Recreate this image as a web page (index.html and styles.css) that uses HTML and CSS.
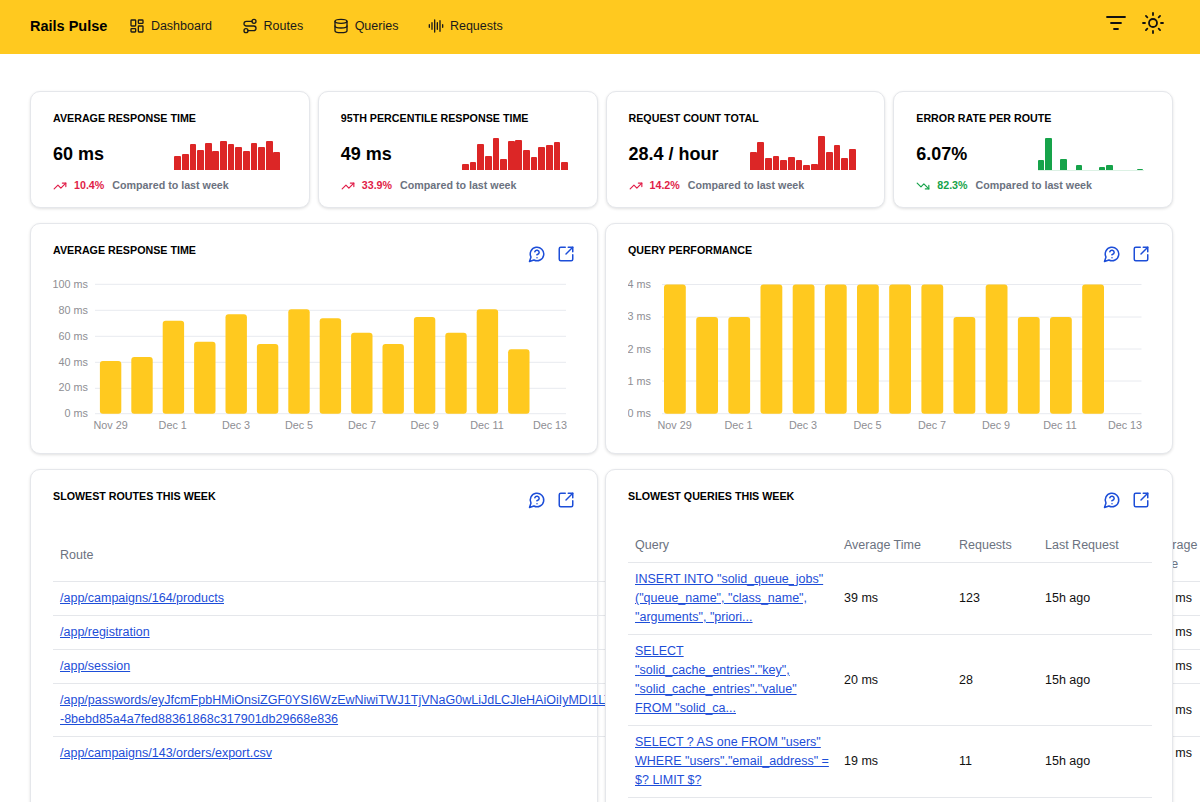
FILE: index.html
```html
<!DOCTYPE html>
<html lang="en">
<head>
<meta charset="utf-8">
<title>Rails Pulse</title>
<link rel="stylesheet" href="styles.css">
</head>
<body>
<header class="topbar">
  <div class="brand">Rails Pulse</div>
  <nav class="nav">
    <a class="nav-item"><svg class="nav-icon" viewBox="0 0 24 24"><rect x="3" y="3" width="7" height="9" rx="1"/><rect x="14" y="3" width="7" height="5" rx="1"/><rect x="14" y="12" width="7" height="9" rx="1"/><rect x="3" y="16" width="7" height="5" rx="1"/></svg>Dashboard</a>
    <a class="nav-item"><svg class="nav-icon" viewBox="0 0 24 24"><circle cx="6" cy="19" r="3"/><path d="M9 19h8.5a3.5 3.5 0 0 0 0-7h-11a3.5 3.5 0 0 1 0-7H15"/><circle cx="18" cy="5" r="3"/></svg>Routes</a>
    <a class="nav-item"><svg class="nav-icon" viewBox="0 0 24 24"><ellipse cx="12" cy="5" rx="9" ry="3"/><path d="M3 5V19A9 3 0 0 0 21 19V5"/><path d="M3 12A9 3 0 0 0 21 12"/></svg>Queries</a>
    <a class="nav-item"><svg class="nav-icon" viewBox="0 0 24 24"><path d="M2 10v4M6 7v10M10 3v18M14 7v10M18 4v16M22 10v4"/></svg>Requests</a>
  </nav>
  <div class="tools">
    <svg class="tool-icon" viewBox="0 0 24 24"><path d="M3 6h18M7 12h10M10 18h4"/></svg>
    <svg class="tool-icon" viewBox="0 0 24 24"><circle cx="12" cy="12" r="4"/><path d="M12 2v2M12 20v2M4.93 4.93l1.41 1.41M17.66 17.66l1.41 1.41M2 12h2M20 12h2M6.34 17.66l-1.41 1.41M19.07 4.93l-1.41 1.41"/></svg>
  </div>
</header>

<main class="page">
  <section class="metrics">
    <article class="card metric">
      <h2 class="card-title">Average Response Time</h2>
      <div class="metric-main">
        <div class="metric-value">60 ms</div>
        <div class="spark spark-red">
          <i style="height:14.4px"></i><i style="height:15.7px"></i><i style="height:25.7px"></i><i style="height:20px"></i><i style="height:27.4px"></i><i style="height:19.4px"></i><i style="height:29px"></i><i style="height:26.4px"></i><i style="height:22.7px"></i><i style="height:19.4px"></i><i style="height:26.7px"></i><i style="height:22.7px"></i><i style="height:29px"></i><i style="height:17.7px"></i>
        </div>
      </div>
      <div class="trend">
        <svg class="trend-icon up" viewBox="0 0 24 24"><path d="M22 7 13.5 15.5 8.5 10.5 2 17"/><path d="M16 7h6v6"/></svg>
        <span class="trend-num up">10.4%</span><span class="trend-note">Compared to last week</span>
      </div>
    </article>
    <article class="card metric">
      <h2 class="card-title">95th Percentile Response Time</h2>
      <div class="metric-main">
        <div class="metric-value">49 ms</div>
        <div class="spark spark-red">
          <i style="height:5.7px"></i><i style="height:7.7px"></i><i style="height:26.3px"></i><i style="height:13.7px"></i><i style="height:31.7px"></i><i style="height:11px"></i><i style="height:29.3px"></i><i style="height:29.7px"></i><i style="height:20.3px"></i><i style="height:12.7px"></i><i style="height:23px"></i><i style="height:24.7px"></i><i style="height:28px"></i><i style="height:8.3px"></i>
        </div>
      </div>
      <div class="trend">
        <svg class="trend-icon up" viewBox="0 0 24 24"><path d="M22 7 13.5 15.5 8.5 10.5 2 17"/><path d="M16 7h6v6"/></svg>
        <span class="trend-num up">33.9%</span><span class="trend-note">Compared to last week</span>
      </div>
    </article>
    <article class="card metric">
      <h2 class="card-title">Request Count Total</h2>
      <div class="metric-main">
        <div class="metric-value">28.4 / hour</div>
        <div class="spark spark-red">
          <i style="height:18.3px"></i><i style="height:27.7px"></i><i style="height:12.3px"></i><i style="height:14.3px"></i><i style="height:9.7px"></i><i style="height:13px"></i><i style="height:9.7px"></i><i style="height:5px"></i><i style="height:6px"></i><i style="height:33.7px"></i><i style="height:17.7px"></i><i style="height:25.3px"></i><i style="height:12.3px"></i><i style="height:21px"></i>
        </div>
      </div>
      <div class="trend">
        <svg class="trend-icon up" viewBox="0 0 24 24"><path d="M22 7 13.5 15.5 8.5 10.5 2 17"/><path d="M16 7h6v6"/></svg>
        <span class="trend-num up">14.2%</span><span class="trend-note">Compared to last week</span>
      </div>
    </article>
    <article class="card metric">
      <h2 class="card-title">Error Rate Per Route</h2>
      <div class="metric-main">
        <div class="metric-value">6.07%</div>
        <div class="spark spark-green">
          <i style="height:10px"></i><i style="height:32.3px"></i><i style="height:0"></i><i style="height:10.7px"></i><i style="height:0"></i><i style="height:5.3px"></i><i style="height:0"></i><i style="height:0"></i><i style="height:2.7px"></i><i style="height:5.3px"></i><i style="height:0"></i><i style="height:0"></i><i style="height:0"></i><i style="height:1.3px"></i>
        </div>
      </div>
      <div class="trend">
        <svg class="trend-icon down" viewBox="0 0 24 24"><path d="M22 17 13.5 8.5 8.5 13.5 2 7"/><path d="M16 17h6v-6"/></svg>
        <span class="trend-num down">82.3%</span><span class="trend-note">Compared to last week</span>
      </div>
    </article>
  </section>

  <section class="panels">
    <article class="card panel">
      <div class="panel-head">
        <h2 class="card-title">Average Response Time</h2>
        <div class="panel-actions">
          <svg class="action-icon" viewBox="0 0 24 24"><path d="M7.9 20A9 9 0 1 0 4 16.1L2 22Z"/><path d="M9.09 9a3 3 0 0 1 5.83 1c0 2-3 3-3 3"/><path d="M12 17h.01"/></svg>
          <svg class="action-icon" viewBox="0 0 24 24"><path d="M21 13v6a2 2 0 0 1-2 2H5a2 2 0 0 1-2-2V5a2 2 0 0 1 2-2h6"/><path d="m21 3-9 9"/><path d="M15 3h6v6"/></svg>
        </div>
      </div>
      <svg class="chart" viewBox="53 275 523 170">
        <g class="grid-lines">
          <line x1="95" x2="566" y1="284.3" y2="284.3"/><line x1="95" x2="566" y1="310.3" y2="310.3"/><line x1="95" x2="566" y1="336.3" y2="336.3"/><line x1="95" x2="566" y1="362.3" y2="362.3"/><line x1="95" x2="566" y1="388.3" y2="388.3"/><line x1="95" x2="566" y1="413.7" y2="413.7"/>
        </g>
        <g class="axis axis-y">
          <text x="88" y="288">100 ms</text><text x="88" y="314">80 ms</text><text x="88" y="340">60 ms</text><text x="88" y="366">40 ms</text><text x="88" y="391">20 ms</text><text x="88" y="417">0 ms</text>
        </g>
        <g class="bars">
          <rect x="99.9" y="361" width="21.4" height="52.7" rx="3"/><rect x="131.3" y="357" width="21.4" height="56.7" rx="3"/><rect x="162.7" y="320.7" width="21.4" height="93" rx="3"/><rect x="194.1" y="341.7" width="21.4" height="72" rx="3"/><rect x="225.5" y="314.3" width="21.4" height="99.4" rx="3"/><rect x="256.9" y="344" width="21.4" height="69.7" rx="3"/><rect x="288.3" y="309.3" width="21.4" height="104.4" rx="3"/><rect x="319.7" y="318.3" width="21.4" height="95.4" rx="3"/><rect x="351.1" y="332.7" width="21.4" height="81" rx="3"/><rect x="382.5" y="344" width="21.4" height="69.7" rx="3"/><rect x="413.9" y="317" width="21.4" height="96.7" rx="3"/><rect x="445.3" y="332.7" width="21.4" height="81" rx="3"/><rect x="476.7" y="309.3" width="21.4" height="104.4" rx="3"/><rect x="508.1" y="349.3" width="21.4" height="64.4" rx="3"/>
        </g>
        <g class="axis axis-x">
          <text x="110.6" y="429">Nov 29</text><text x="172.7" y="429">Dec 1</text><text x="236" y="429">Dec 3</text><text x="299" y="429">Dec 5</text><text x="362" y="429">Dec 7</text><text x="424.6" y="429">Dec 9</text><text x="487" y="429">Dec 11</text><text x="550" y="429">Dec 13</text>
        </g>
      </svg>
    </article>

    <article class="card panel">
      <div class="panel-head">
        <h2 class="card-title">Query Performance</h2>
        <div class="panel-actions">
          <svg class="action-icon" viewBox="0 0 24 24"><path d="M7.9 20A9 9 0 1 0 4 16.1L2 22Z"/><path d="M9.09 9a3 3 0 0 1 5.83 1c0 2-3 3-3 3"/><path d="M12 17h.01"/></svg>
          <svg class="action-icon" viewBox="0 0 24 24"><path d="M21 13v6a2 2 0 0 1-2 2H5a2 2 0 0 1-2-2V5a2 2 0 0 1 2-2h6"/><path d="m21 3-9 9"/><path d="M15 3h6v6"/></svg>
        </div>
      </div>
      <svg class="chart" viewBox="628 275 523 170">
        <g class="grid-lines">
          <line x1="662" x2="1141.5" y1="284.5" y2="284.5"/><line x1="662" x2="1141.5" y1="317" y2="317"/><line x1="662" x2="1141.5" y1="349" y2="349"/><line x1="662" x2="1141.5" y1="381" y2="381"/><line x1="662" x2="1141.5" y1="413.7" y2="413.7"/>
        </g>
        <g class="axis axis-y">
          <text x="651" y="288">4 ms</text><text x="651" y="320">3 ms</text><text x="651" y="353">2 ms</text><text x="651" y="385">1 ms</text><text x="651" y="417">0 ms</text>
        </g>
        <g class="bars">
          <rect x="664" y="284.5" width="21.8" height="129.2" rx="3"/><rect x="696.2" y="317" width="21.8" height="96.7" rx="3"/><rect x="728.3" y="317" width="21.8" height="96.7" rx="3"/><rect x="760.5" y="284.5" width="21.8" height="129.2" rx="3"/><rect x="792.7" y="284.5" width="21.8" height="129.2" rx="3"/><rect x="824.9" y="284.5" width="21.8" height="129.2" rx="3"/><rect x="857" y="284.5" width="21.8" height="129.2" rx="3"/><rect x="889.2" y="284.5" width="21.8" height="129.2" rx="3"/><rect x="921.4" y="284.5" width="21.8" height="129.2" rx="3"/><rect x="953.5" y="317" width="21.8" height="96.7" rx="3"/><rect x="985.7" y="284.5" width="21.8" height="129.2" rx="3"/><rect x="1017.9" y="317" width="21.8" height="96.7" rx="3"/><rect x="1050" y="317" width="21.8" height="96.7" rx="3"/><rect x="1082.2" y="284.5" width="21.8" height="129.2" rx="3"/>
        </g>
        <g class="axis axis-x">
          <text x="674.6" y="429">Nov 29</text><text x="738.5" y="429">Dec 1</text><text x="803" y="429">Dec 3</text><text x="867.5" y="429">Dec 5</text><text x="932" y="429">Dec 7</text><text x="996" y="429">Dec 9</text><text x="1060" y="429">Dec 11</text><text x="1125" y="429">Dec 13</text>
        </g>
      </svg>
    </article>

    <article class="card panel panel-table">
      <div class="panel-head">
        <h2 class="card-title">Slowest Routes This Week</h2>
        <div class="panel-actions">
          <svg class="action-icon" viewBox="0 0 24 24"><path d="M7.9 20A9 9 0 1 0 4 16.1L2 22Z"/><path d="M9.09 9a3 3 0 0 1 5.83 1c0 2-3 3-3 3"/><path d="M12 17h.01"/></svg>
          <svg class="action-icon" viewBox="0 0 24 24"><path d="M21 13v6a2 2 0 0 1-2 2H5a2 2 0 0 1-2-2V5a2 2 0 0 1 2-2h6"/><path d="m21 3-9 9"/><path d="M15 3h6v6"/></svg>
        </div>
      </div>
      <table class="data routes">
        <thead>
          <tr><th class="col-route">Route</th><th class="col-avg">Average Time</th><th class="col-req">Requests</th><th class="col-last">Last Request</th></tr>
        </thead>
        <tbody>
          <tr><td><a href="#">/app/campaigns/164/products</a></td><td>312 ms</td><td>41</td><td>15h ago</td></tr>
          <tr><td><a href="#">/app/registration</a></td><td>288 ms</td><td>36</td><td>15h ago</td></tr>
          <tr><td><a href="#">/app/session</a></td><td>245 ms</td><td>52</td><td>15h ago</td></tr>
          <tr><td><a href="#">/app/passwords/eyJfcmFpbHMiOnsiZGF0YSI6WzEwNiwiTWJ1TjVNaG0wLiJdLCJleHAiOiIyMDI1LTEyLTE0VDEyOjAwOjAwLjAwMFoiLCJwdXIiOiJwYXNzd29yZF9yZXNldCJ9fQ==--8bebd85a4a7fed88361868c317901db29668e836</a></td><td>231 ms</td><td>9</td><td>15h ago</td></tr>
          <tr><td><a href="#">/app/campaigns/143/orders/export.csv</a></td><td>196 ms</td><td>14</td><td>15h ago</td></tr>
        </tbody>
      </table>
    </article>

    <article class="card panel panel-table panel-front">
      <div class="panel-head">
        <h2 class="card-title">Slowest Queries This Week</h2>
        <div class="panel-actions">
          <svg class="action-icon" viewBox="0 0 24 24"><path d="M7.9 20A9 9 0 1 0 4 16.1L2 22Z"/><path d="M9.09 9a3 3 0 0 1 5.83 1c0 2-3 3-3 3"/><path d="M12 17h.01"/></svg>
          <svg class="action-icon" viewBox="0 0 24 24"><path d="M21 13v6a2 2 0 0 1-2 2H5a2 2 0 0 1-2-2V5a2 2 0 0 1 2-2h6"/><path d="m21 3-9 9"/><path d="M15 3h6v6"/></svg>
        </div>
      </div>
      <table class="data queries">
        <thead>
          <tr><th class="q-query">Query</th><th class="q-avg">Average Time</th><th class="q-req">Requests</th><th class="q-last">Last Request</th></tr>
        </thead>
        <tbody>
          <tr><td><a href="#">INSERT INTO "solid_queue_jobs" ("queue_name", "class_name", "arguments", "priori...</a></td><td>39 ms</td><td>123</td><td>15h ago</td></tr>
          <tr><td><a href="#">SELECT "solid_cache_entries"."key", "solid_cache_entries"."value" FROM "solid_ca...</a></td><td>20 ms</td><td>28</td><td>15h ago</td></tr>
          <tr><td><a href="#">SELECT ? AS one FROM "users" WHERE "users"."email_address" = $? LIMIT $?</a></td><td>19 ms</td><td>11</td><td>15h ago</td></tr>
          <tr><td><a href="#">SELECT "solid_queue_jobs".* FROM "solid_queue_jobs" WHERE "solid_queue_jobs"...</a></td><td>12 ms</td><td>9</td><td>15h ago</td></tr>
        </tbody>
      </table>
    </article>
  </section>
</main>
</body>
</html>
```

FILE: styles.css
```css
html {
  overflow: hidden;
  height: 802px;
}

body {
  margin: 0;
  height: 802px;
  overflow: hidden;
  background: #fff;
  color: #000;
  font-family: "Liberation Sans", Arial, sans-serif;
  font-size: 13px;
}

.topbar {
  box-sizing: border-box;
  display: flex;
  align-items: center;
  height: 54px;
  padding: 0 35px 2px 30px;
  background: #ffc91f;
}

.brand {
  font-size: 14.5px;
  font-weight: 700;
  margin-right: 22px;
}

.nav {
  display: flex;
  align-items: center;
  gap: 30px;
}

.nav-item {
  display: flex;
  align-items: center;
  gap: 5.5px;
  font-size: 12.5px;
  line-height: 18px;
  color: #1a1a1a;
}

.nav-icon {
  width: 16px;
  height: 16px;
  fill: none;
  stroke: #1a1a1a;
  stroke-width: 2;
  stroke-linecap: round;
  stroke-linejoin: round;
}

.tools {
  display: flex;
  align-items: center;
  gap: 13px;
  margin-left: auto;
  margin-bottom: 7px;
}

.tool-icon {
  width: 24px;
  height: 24px;
  fill: none;
  stroke: #111;
  stroke-width: 1.8;
  stroke-linecap: round;
  stroke-linejoin: round;
}

.page {
  padding: 37px 27px 0 30px;
}

.metrics {
  display: grid;
  grid-template-columns: repeat(4, minmax(0, 1fr));
  gap: 8px;
}

.card {
  box-sizing: border-box;
  min-width: 0;
  background: #fff;
  border: 1px solid #e5e7eb;
  border-radius: 10px;
  box-shadow: 0 1px 3px rgba(0, 0, 0, 0.12);
  padding: 19px 22px 0;
}

.card-title {
  margin: 0;
  font-size: 10.7px;
  line-height: 14px;
  font-weight: 700;
  text-transform: uppercase;
  color: #000;
}

.metric {
  height: 117px;
}

.metric-main {
  display: flex;
  align-items: center;
  justify-content: space-between;
  height: 33px;
  margin-top: 12px;
  padding-right: 6.5px;
}

.metric-value {
  font-size: 18px;
  line-height: 24px;
  font-weight: 700;
}

.spark {
  display: flex;
  align-items: flex-end;
  gap: 0.8px;
  width: 106px;
  height: 33px;
}

.spark i {
  flex: 1;
  display: block;
  border-radius: 1px 1px 0 0;
}

.spark-red i {
  background: #dc2626;
}

.spark-green {
  box-shadow: 0 1px 0 rgba(22, 163, 74, 0.15);
}

.spark-green i {
  background: #16a34a;
}

.trend {
  display: flex;
  align-items: center;
  margin-top: 8px;
  font-size: 10.7px;
  line-height: 15px;
  font-weight: 700;
}

.trend-icon {
  width: 14px;
  height: 14px;
  fill: none;
  stroke-width: 2;
  stroke-linecap: round;
  stroke-linejoin: round;
  margin-right: 7px;
}

.trend-icon.up {
  stroke: #e11d48;
}

.trend-icon.down {
  stroke: #16a34a;
}

.trend-num {
  margin-right: 8px;
}

.trend-num.up {
  color: #e11d48;
}

.trend-num.down {
  color: #16a34a;
}

.trend-note {
  color: #6b7280;
}

.panels {
  display: grid;
  grid-template-columns: repeat(2, minmax(0, 1fr));
  gap: 15px 7px;
  margin-top: 15px;
}

.panel {
  height: 231px;
}

.panel-table {
  height: 400px;
}

.panel-front {
  position: relative;
  z-index: 1;
}

.panel-head {
  display: flex;
  justify-content: space-between;
  align-items: flex-start;
  height: 20px;
  margin-bottom: 12px;
}

.panel-actions {
  display: flex;
  gap: 11px;
  margin-top: 2px;
  padding-right: 0.5px;
}

.action-icon {
  width: 18px;
  height: 18px;
  fill: none;
  stroke: #1d4ed8;
  stroke-width: 2;
  stroke-linecap: round;
  stroke-linejoin: round;
}

.chart {
  display: block;
  width: 523px;
  height: 170px;
}

.grid-lines line {
  stroke: #e8eaef;
  stroke-width: 1;
}

.bars rect {
  fill: #ffc91f;
}

.axis text {
  font-family: "Liberation Sans", Arial, sans-serif;
  font-size: 10.8px;
  fill: #8e8e93;
}

.axis-y text {
  text-anchor: end;
}

.axis-x text {
  text-anchor: middle;
}

.data {
  border-collapse: collapse;
  table-layout: fixed;
  font-size: 12.5px;
  line-height: 19px;
  margin-top: 20px;
}

.data th {
  box-sizing: border-box;
  padding: 7px;
  text-align: left;
  font-weight: 400;
  color: #6b7280;
  border-bottom: 1px solid #e5e7eb;
}

.data td {
  padding: 7px;
  color: #111;
  border-bottom: 1px solid #e5e7eb;
  vertical-align: middle;
}

.data tbody tr:last-child td {
  border-bottom: 0;
}

.data a {
  color: #1d4ed8;
  text-decoration: underline;
}

.routes {
  width: 1400px;
}

.col-route {
  width: 1091px;
}

.col-avg {
  width: 64px;
}

.col-req {
  width: 100px;
}

.col-last {
  width: 145px;
}

.queries {
  width: 524px;
}

.q-query {
  width: 209px;
}

.q-avg {
  width: 115px;
}

.q-req {
  width: 86px;
}

.q-last {
  width: 114px;
}
```
